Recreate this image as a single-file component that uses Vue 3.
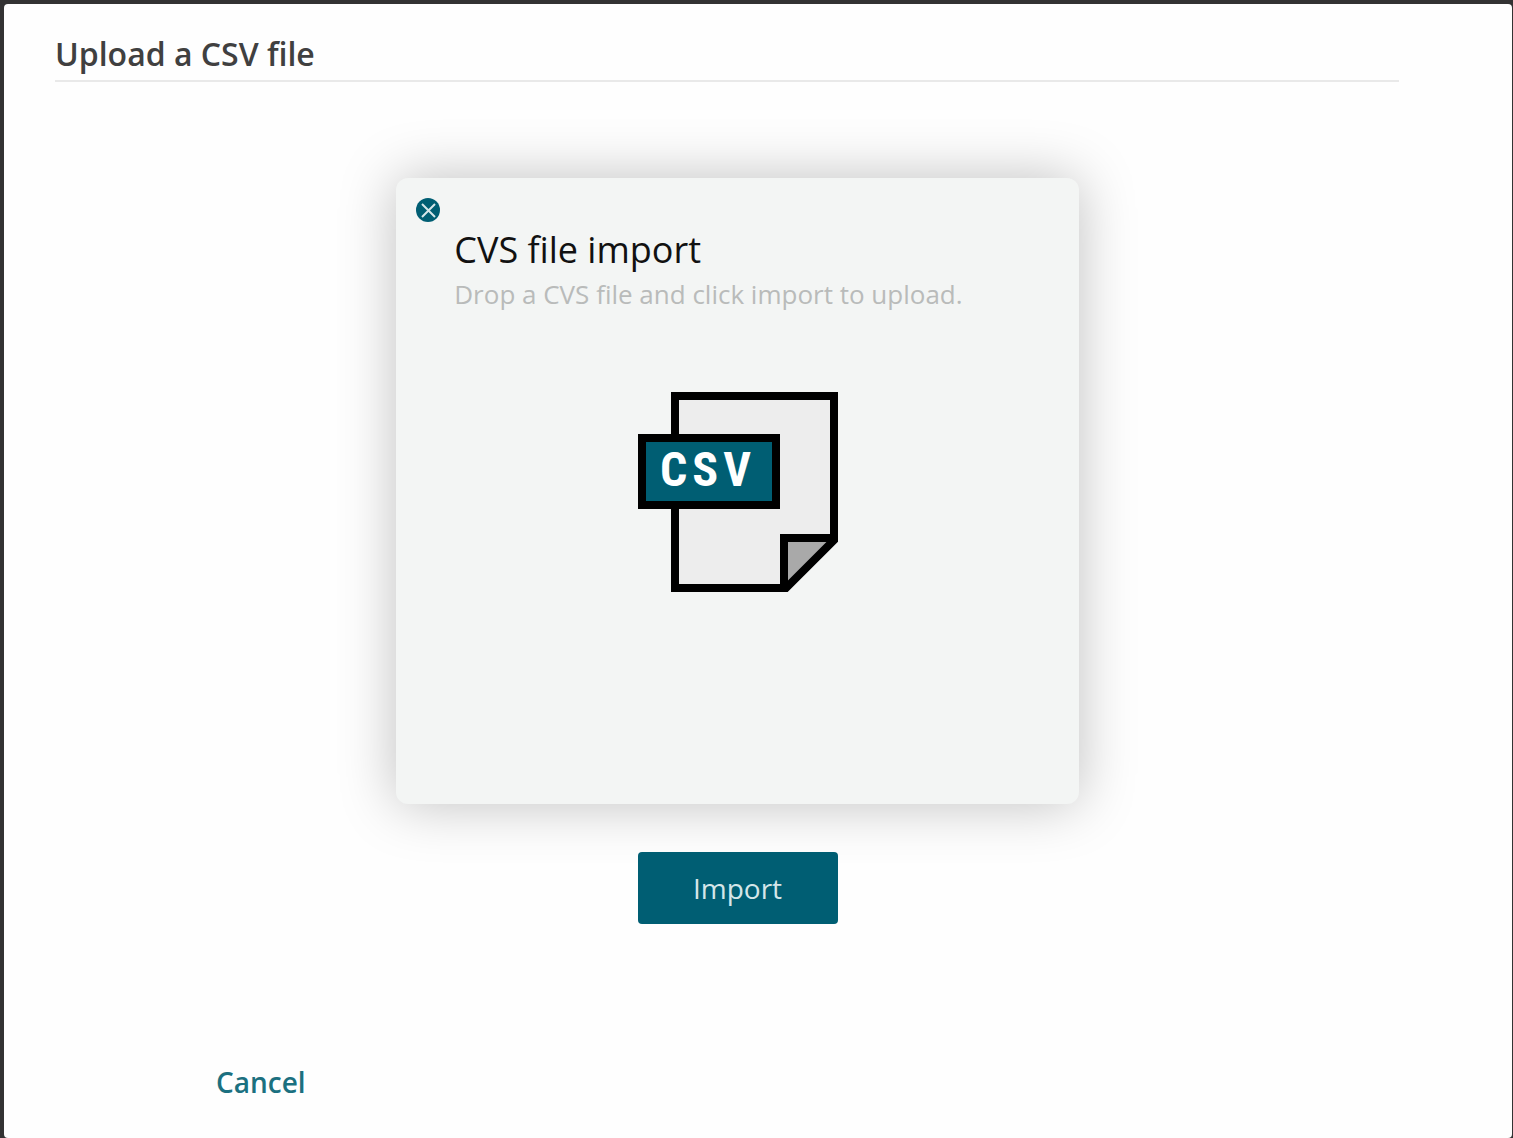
<script setup>
import { ref } from 'vue'

const open = ref(true)
</script>

<template>
  <div class="backdrop">
    <main class="modal">
      <header class="modal-header">
        <h1>Upload a CSV file</h1>
      </header>
      <section class="import">
        <div v-if="open" class="card">
          <button class="close" type="button" aria-label="Close" @click="open = false">
            <svg viewBox="0 0 24 24" width="24" height="24" aria-hidden="true">
              <circle cx="12" cy="12" r="12" fill="#005e73" />
              <path d="M6 6L19 19M19 6L6 19" stroke="#d5e6e9" stroke-width="2" fill="none" />
            </svg>
          </button>
          <div class="copy">
            <h2>CVS file import</h2>
            <p>Drop a CVS file and click import to upload.</p>
          </div>
          <svg class="file" viewBox="0 0 200 200" width="200" height="200" role="img" aria-label="CSV file">
            <path d="M37 4H196V148L148 196H37Z" fill="#ededed" />
            <path d="M146 146H198L146 198Z" fill="#a9a9a9" />
            <path d="M146 196V146H196" fill="none" stroke="#000" stroke-width="8" />
            <path d="M37 4H196V148L148 196H37Z" fill="none" stroke="#000" stroke-width="8" />
            <rect x="4" y="46" width="134" height="67" fill="#005e73" stroke="#000" stroke-width="8" />
            <text class="file-label" x="22" y="94">CSV</text>
          </svg>
        </div>
        <button class="primary" type="button">Import</button>
      </section>
      <footer class="modal-footer">
        <a href="#">Cancel</a>
      </footer>
    </main>
  </div>
</template>

<style>
body {
  margin: 0;
  background: #333233;
}
</style>

<style scoped>
.backdrop {
  box-sizing: border-box;
  min-height: 100vh;
  padding: 4px 1px 0 4px;
  display: flex;
  background: #333233;
  font-family: "Open Sans", "Noto Sans", sans-serif;
}
.modal {
  box-sizing: border-box;
  flex: 1;
  display: flex;
  flex-direction: column;
  padding: 28px 92px 32px 51px;
  border-radius: 4px;
  background: #fefefe;
}
.modal-header {
  margin-right: 21px;
  padding-bottom: 4px;
  border-bottom: 2px solid #e9e9e9;
}
h1 {
  margin: 0;
  font-size: 32px;
  line-height: 44px;
  font-weight: 600;
  color: #404040;
}
.import {
  display: flex;
  flex-direction: column;
  align-items: center;
  gap: 48px;
  padding-top: 96px;
}
.card {
  box-sizing: border-box;
  width: 50%;
  min-height: 626px;
  padding: 20px;
  display: flex;
  flex-direction: column;
  border-radius: 12px;
  background: #f3f5f4;
  box-shadow: 0 0 56px rgba(0, 0, 0, 0.25);
}
.close {
  width: 24px;
  height: 24px;
  padding: 0;
  border: 0;
  background: none;
  cursor: pointer;
}
.close svg {
  display: block;
}
.copy {
  padding: 4px 0 0 38px;
}
h2 {
  margin: 0;
  font-size: 36px;
  line-height: 48px;
  font-weight: 400;
  color: #111;
}
p {
  margin: 0;
  font-size: 26px;
  line-height: 40px;
  color: #b9bbba;
}
.file {
  align-self: center;
  margin-top: 78px;
}
.file-label {
  font-family: "Roboto Condensed", Roboto, sans-serif;
  font-size: 48px;
  font-weight: 700;
  letter-spacing: 5px;
  fill: #fff;
}
.primary {
  width: 200px;
  height: 72px;
  padding: 0;
  border: 0;
  border-radius: 4px;
  background: #005e73;
  color: #d5e6e9;
  font: 400 28px/40px "Open Sans", "Noto Sans", sans-serif;
  cursor: pointer;
}
.modal-footer {
  margin-top: auto;
  padding-left: 161px;
}
a {
  font-size: 28px;
  line-height: 48px;
  font-weight: 600;
  color: #1b7080;
  text-decoration: none;
}
</style>
